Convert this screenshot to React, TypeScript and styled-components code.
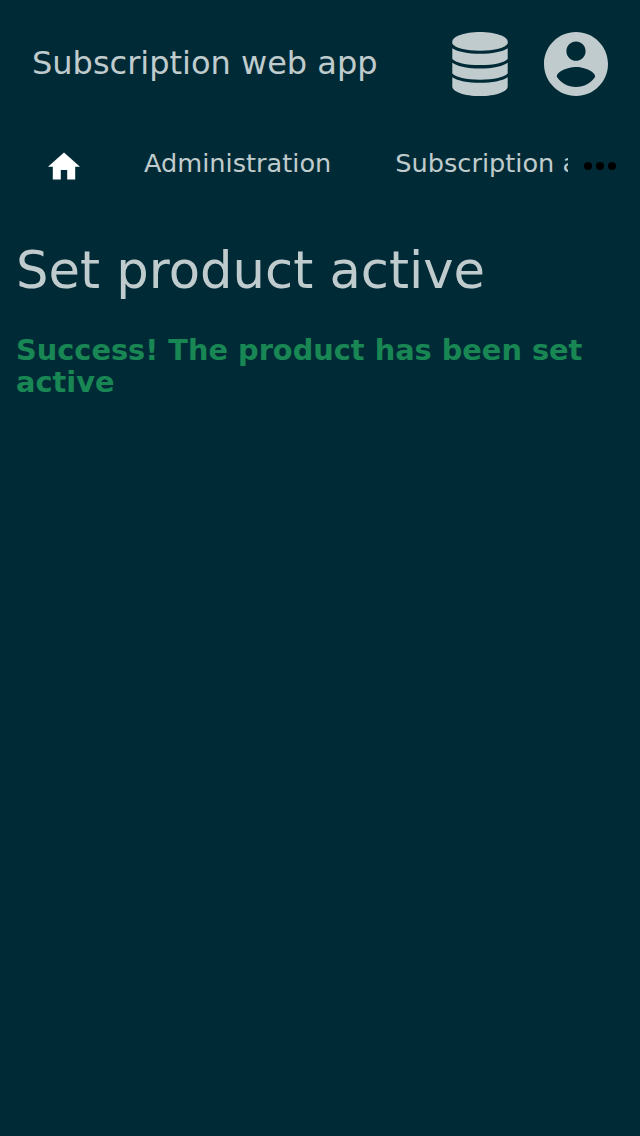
import React from "react";
import styled, { createGlobalStyle } from "styled-components";

const GlobalStyle = createGlobalStyle`
  * { box-sizing: border-box; }
  body {
    margin: 0;
    background: #002b36;
    color: #c0cbcd;
    font-family: "DejaVu Sans", sans-serif;
  }
`;

const Page = styled.div`
  min-height: 1136px;
  display: flex;
  flex-direction: column;
`;

const Header = styled.header`
  height: 128px;
  padding: 0 32px;
  display: flex;
  align-items: center;
`;

const Brand = styled.div`
  flex: 1;
  padding-bottom: 2px;
  font-size: 32px;
  line-height: 38px;
  white-space: nowrap;
`;

const HeaderIcon = styled.svg`
  flex: none;
  display: block;
  width: 64px;
  height: 64px;
  margin-left: 32px;
  fill: currentColor;
`;

const Nav = styled.nav`
  height: 72px;
  display: flex;
`;

const Tabs = styled.div`
  width: 568px;
  height: 72px;
  display: flex;
  overflow: hidden;
`;

const Tab = styled.a`
  flex: none;
  padding: 20px 32px 0;
  font-size: 25.6px;
  line-height: 30px;
  white-space: nowrap;
`;

const HomeTab = styled.a`
  flex: none;
  width: 112px;
  padding: 22px 48px 0;
  color: #fff;
`;

const HomeIcon = styled.svg`
  display: block;
  width: 32px;
  height: 32px;
  fill: currentColor;
`;

const More = styled.button`
  width: 64px;
  height: 72px;
  padding: 4px 0 0;
  border: 0;
  background: none;
  color: #000;
  display: flex;
  align-items: center;
  justify-content: center;
`;

const Main = styled.main`
  padding: 40px 16px;
`;

const Title = styled.h1`
  margin: 0;
  font-size: 51.2px;
  line-height: 60px;
  font-weight: 400;
`;

const Success = styled.p`
  margin: 34px 0 0;
  color: #198754;
  font-size: 28.8px;
  line-height: 32px;
  font-weight: 700;
`;

export default function App() {
  return (
    <Page>
      <GlobalStyle />
      <Header>
        <Brand>Subscription web app</Brand>
        <HeaderIcon viewBox="0 0 64 64">
          <path d="M32 0C47.5 0 59.7 4.5 59.7 9.6V11.6C57.5 15.9 46.5 18.8 32 18.8S6.5 15.9 4.3 11.6V9.6C4.3 4.5 16.5 0 32 0Z" />
          <path d="M4.3 16.2C9.5 19.8 20 21.7 32 21.7S54.5 19.8 59.7 16.2V26.9C56.5 30.6 46 33.1 32 33.1S7.5 30.6 4.3 26.9Z" />
          <path d="M4.3 30.8C9.5 34.6 20 36.6 32 36.6S54.5 34.6 59.7 30.8V41.6C56.5 45.3 46 47.7 32 47.7S7.5 45.3 4.3 41.6Z" />
          <path d="M4.3 45.2C9.5 48.8 20 50.8 32 50.8S54.5 48.8 59.7 45.2V54.4C59.7 59.7 47.5 64 32 64S4.3 59.7 4.3 54.4Z" />
        </HeaderIcon>
        <HeaderIcon viewBox="2 2 20 20">
          <path d="M12 2C6.48 2 2 6.48 2 12s4.48 10 10 10 10-4.48 10-10S17.52 2 12 2zm0 3c1.66 0 3 1.34 3 3s-1.34 3-3 3-3-1.34-3-3 1.34-3 3-3zm0 14.2c-2.5 0-4.71-1.28-6-3.22.03-1.99 4-3.08 6-3.08 1.99 0 5.97 1.09 6 3.08-1.29 1.94-3.5 3.22-6 3.22z" />
        </HeaderIcon>
      </Header>
      <Nav>
        <Tabs>
          <HomeTab aria-label="Home">
            <HomeIcon viewBox="2 1.5 20 20">
              <path d="M10 20v-6h4v6h5v-8h3L12 3 2 12h3v8z" />
            </HomeIcon>
          </HomeTab>
          <Tab>Administration</Tab>
          <Tab>Subscription admin</Tab>
        </Tabs>
        <More aria-label="More">
          <svg width="32" height="8" viewBox="0 0 32 8" fill="currentColor">
            <circle cx="4" cy="4" r="4" />
            <circle cx="16" cy="4" r="4" />
            <circle cx="28" cy="4" r="4" />
          </svg>
        </More>
      </Nav>
      <Main>
        <Title>Set product active</Title>
        <Success>Success! The product has been set active</Success>
      </Main>
    </Page>
  );
}
